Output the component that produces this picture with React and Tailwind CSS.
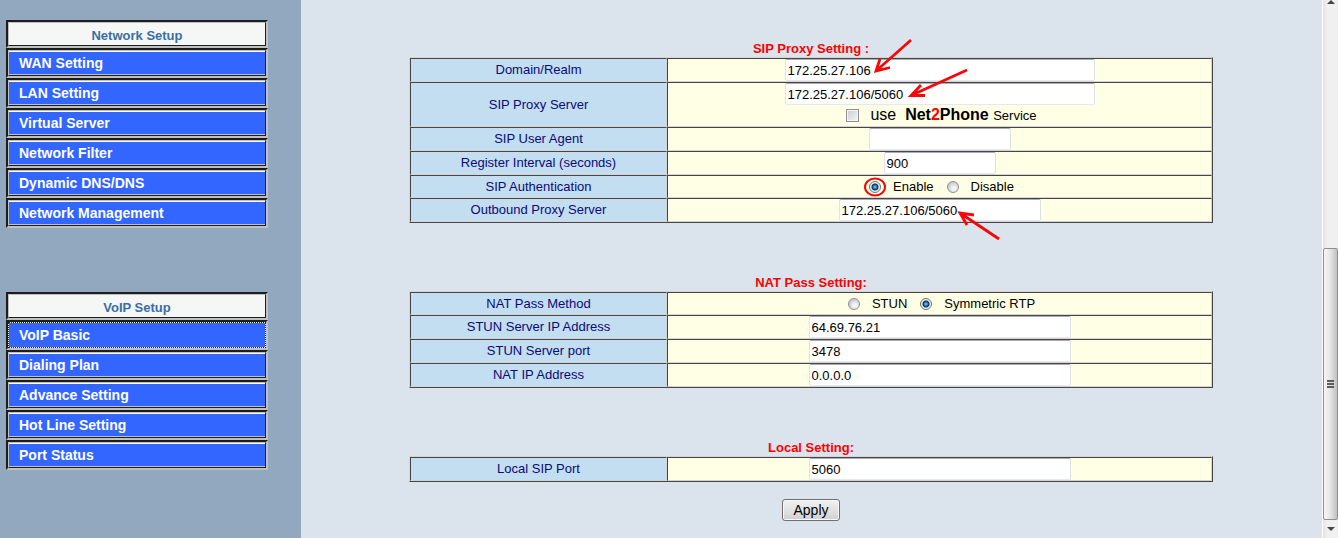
import React from "react";

const networkItems = [
  "WAN Setting",
  "LAN Setting",
  "Virtual Server",
  "Network Filter",
  "Dynamic DNS/DNS",
  "Network Management",
];

const voipItems = [
  "VoIP Basic",
  "Dialing Plan",
  "Advance Setting",
  "Hot Line Setting",
  "Port Status",
];

const frame =
  "border-2 border-t-[#1c1e1e] border-l-[#1c1e1e] border-r-[#c0c0c0] border-b-[#c0c0c0]";
const innerFrame =
  "border border-t-[#c0c0c0] border-l-[#c0c0c0] border-r-[#1c1e1e] border-b-[#1c1e1e]";

function Menu({ title, items, focused }) {
  return (
    <nav aria-label={title}>
      <div className={`h-7 ${frame}`}>
        <h2
          className={`h-full bg-[#f5f7f6] text-center text-[13px] leading-[26px] font-bold text-[#3a6ea5] ${innerFrame}`}
        >
          {title}
        </h2>
      </div>
      <ul>
        {items.map((item) => (
          <li key={item} className={`h-[30px] ${frame}`}>
            <a
              href="#"
              className={`block h-full ${
                item === focused
                  ? "border border-dotted border-t-[#1c1e1e] border-r-[#1c1e1e] border-b-[#1c1e1e] border-l-[#1c1e1e] bg-white"
                  : innerFrame
              }`}
            >
              <span
                className={`block h-full border-t border-b bg-[#3366ff] pl-[10px] text-[14px] leading-[22px] font-bold text-white ${
                  item === focused
                    ? "border-t-[#3366ff] border-b-[#3366ff]"
                    : "border-t-white border-b-[#c0c0c0]"
                }`}
              >
                {item}
              </span>
            </a>
          </li>
        ))}
      </ul>
    </nav>
  );
}

function Section({ title, children }) {
  return (
    <section>
      <h2 className="text-center text-[13px] leading-[16px] font-bold text-[#ff0000]">{title}</h2>
      <table className="w-full table-fixed border-separate border-spacing-0 border border-t-[#d4d4d4] border-r-[#484448] border-b-[#484448] border-l-[#d4d4d4]">
        <tbody>{children}</tbody>
      </table>
    </section>
  );
}

const cell =
  "border border-t-[#484448] border-l-[#484448] border-r-[#d4d4d4] border-b-[#d4d4d4] p-0 text-center";

function Row({ id, label, children }) {
  return (
    <tr>
      <th scope="row" className={`w-[257px] bg-[#c3ddf1] font-normal text-[#0a0a78] ${cell}`}>
        {id ? <label htmlFor={id}>{label}</label> : label}
      </th>
      <td className={`bg-[#ffffe5] text-black ${cell}`}>{children}</td>
    </tr>
  );
}

function Field({ id, value = "", width, children }) {
  return (
    <div className={`relative mx-auto h-[22px] ${width}`}>
      <input
        id={id}
        type="text"
        defaultValue={value}
        className="block h-full w-full rounded-[2px] border border-t-[#abadb3] border-r-[#dbdfe6] border-b-[#e3e9ef] border-l-[#e2e3ea] bg-white px-[2px] outline-none"
      />
      {children}
    </div>
  );
}

function Choice({ name, label, checked, circled }) {
  return (
    <label className="flex items-center">
      <span className="relative mr-3 flex">
        <input
          type="radio"
          name={name}
          defaultChecked={checked}
          className="h-3 w-3 appearance-none rounded-full border border-[#8e8f8f] bg-[radial-gradient(circle_at_60%_65%,#f4f4f4_20%,#c8cbd0_70%)] checked:border-[#6b7480] checked:bg-[radial-gradient(circle_at_50%_50%,#7fd4f5_0px,#1b6f9e_2px,#0b2c4c_3px,#e8ebee_4px,#f4f4f4_6px)]"
        />
        {circled && (
          <svg
            className="pointer-events-none absolute -top-1 -left-[6px] h-5 w-6"
            viewBox="0 0 24 20"
            fill="none"
            stroke="#f80408"
            strokeWidth="2"
          >
            <ellipse cx="12" cy="10" rx="10" ry="8.5" />
          </svg>
        )}
      </span>
      {label}
    </label>
  );
}

function Arrow({ className, width, height, d }) {
  return (
    <svg
      className={`pointer-events-none absolute z-10 ${className}`}
      width={width}
      height={height}
      viewBox={`0 0 ${width} ${height}`}
      fill="none"
      stroke="#f90606"
      strokeWidth="2.8"
      strokeLinejoin="miter"
    >
      <path d={d} />
    </svg>
  );
}

function ScrollBar() {
  return (
    <div
      aria-hidden="true"
      className="flex w-4 shrink-0 flex-col items-center border-l border-white bg-gradient-to-r from-[#e4e4e4] to-[#f0f0f0] to-30%"
    >
      <svg className="h-[5px] w-2 shrink-0" viewBox="0 0 8 5">
        <path d="M4 0L8 4H0z" fill="#444" />
      </svg>
      <div className="flex-[244]" />
      <div className="flex w-full flex-[271] flex-col items-center justify-center gap-px rounded-[2px] border border-[#8f8f8f] bg-gradient-to-r from-[#f6f6f6] via-[#e4e4e5] to-[#bfc0c2]">
        <span className="h-[2px] w-[7px] bg-[#5c5c5c]" />
        <span className="h-[2px] w-[7px] bg-[#5c5c5c]" />
        <span className="h-[2px] w-[7px] bg-[#5c5c5c]" />
      </div>
      <svg className="my-[7px] h-1 w-2 shrink-0" viewBox="0 0 8 4">
        <path d="M0 0H8L4 4z" fill="#444" />
      </svg>
    </div>
  );
}

export default function App() {
  return (
    <div className="flex min-h-screen bg-[#dbe3ec] font-['Liberation_Sans',Arial,sans-serif] text-[13px] leading-[18px]">
      <aside className="flex w-[301px] shrink-0 flex-col gap-16 bg-[#92a8be] pt-5 pr-[33px] pl-[6px]">
        <Menu title="Network Setup" items={networkItems} />
        <Menu title="VoIP Setup" items={voipItems} focused="VoIP Basic" />
      </aside>

      <main className="min-w-0 flex-1 pt-[41px] pr-[109px] pl-[108px]">
        <form className="flex flex-col gap-[52px]" onSubmit={(e) => e.preventDefault()}>
          <Section title="SIP Proxy Setting :">
            <Row id="realm" label="Domain/Realm">
              <Field id="realm" value="172.25.27.106" width="w-[310px]">
                <Arrow
                  className="-top-[21px] left-[88px]"
                  width={40}
                  height={38}
                  d="M38 2L3 33M7 21L3 33L17 29.500"
                />
              </Field>
            </Row>
            <Row id="proxy" label="SIP Proxy Server">
              <Field id="proxy" value="172.25.27.106/5060" width="w-[310px]">
                <Arrow
                  className="-top-[15px] left-[122px]"
                  width={62}
                  height={32}
                  d="M60 2L4 27.500M14 17L4 27.500L18 27.500"
                />
              </Field>
              <label className="flex h-[21px] items-center justify-center pl-1">
                <input
                  type="checkbox"
                  className="mr-[11px] h-[13px] w-[13px] appearance-none border border-[#8e8f8f] bg-gradient-to-br from-[#c9ccd1] to-[#f6f6f6] shadow-[inset_0_0_0_1px_#f4f4f4]"
                />
                <span className="text-[16px]">
                  use&nbsp;{" "}
                  <b>
                    Net<span className="text-[#ff0000]">2</span>Phone
                  </b>{" "}
                  <span className="text-[13px]">Service</span>
                </span>
              </label>
            </Row>
            <Row id="agent" label="SIP User Agent">
              <Field id="agent" width="w-[142px]" />
            </Row>
            <Row id="interval" label="Register Interval (seconds)">
              <Field id="interval" value="900" width="w-[112px]" />
            </Row>
            <Row label="SIP Authentication">
              <div className="flex h-[21px] items-center justify-center gap-[13px] pl-1">
                <Choice name="auth" label="Enable" checked circled />
                <Choice name="auth" label="Disable" />
              </div>
            </Row>
            <Row id="outbound" label="Outbound Proxy Server">
              <Field id="outbound" value="172.25.27.106/5060" width="w-[202px]">
                <Arrow
                  className="top-[10px] left-[118px]"
                  width={44}
                  height={32}
                  d="M42 30L3 4M10 16L3 4L17 6"
                />
              </Field>
            </Row>
          </Section>

          <Section title="NAT Pass Setting:">
            <Row label="NAT Pass Method">
              <div className="flex h-[21px] items-center justify-center gap-[13px] pl-1">
                <Choice name="nat" label="STUN" />
                <Choice name="nat" label="Symmetric RTP" checked />
              </div>
            </Row>
            <Row id="stun-ip" label="STUN Server IP Address">
              <Field id="stun-ip" value="64.69.76.21" width="w-[262px]" />
            </Row>
            <Row id="stun-port" label="STUN Server port">
              <Field id="stun-port" value="3478" width="w-[262px]" />
            </Row>
            <Row id="nat-ip" label="NAT IP Address">
              <Field id="nat-ip" value="0.0.0.0" width="w-[262px]" />
            </Row>
          </Section>

          <div>
            <Section title="Local Setting:">
              <Row id="sip-port" label="Local SIP Port">
                <Field id="sip-port" value="5060" width="w-[262px]" />
              </Row>
            </Section>
            <button
              type="submit"
              className="mx-auto mt-[17px] block h-[22px] rounded-[3px] border border-[#707070] bg-gradient-to-b from-[#f2f2f2] via-[#e2e2e2] to-[#cfcfcf] px-[10px] text-[14px] leading-5 text-black shadow-[inset_0_0_0_1px_#f8f8f8]"
            >
              Apply
            </button>
          </div>
        </form>
      </main>

      <ScrollBar />
    </div>
  );
}
